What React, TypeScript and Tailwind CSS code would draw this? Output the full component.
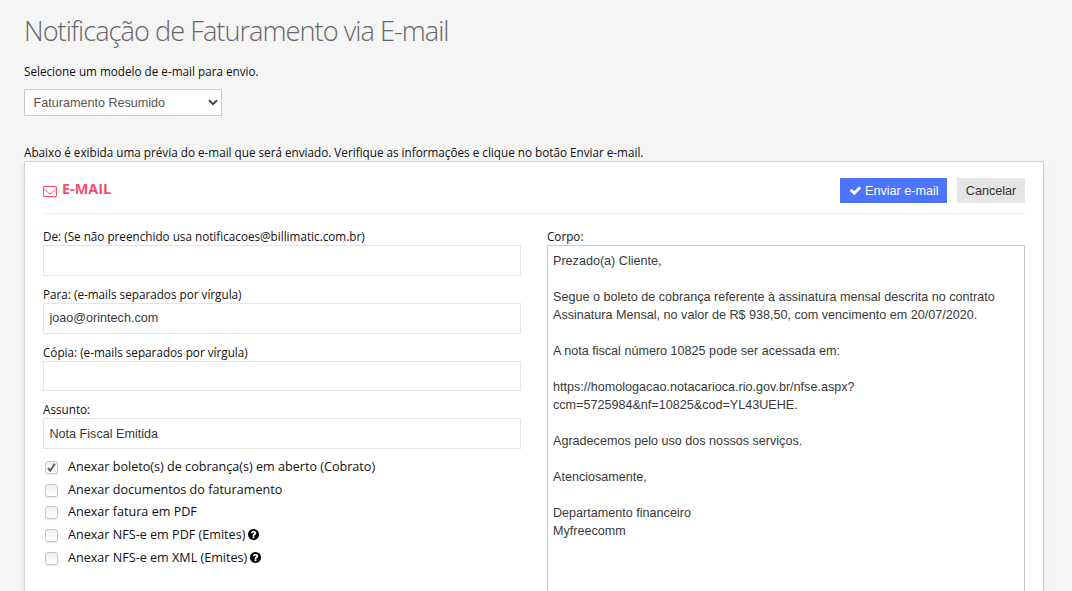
import React from "react";

const labelCls = "h-[18px] text-[11.71px] leading-[18px] whitespace-nowrap text-[#111]";
const inputCls =
  "block w-full border border-[#e5e5e5] bg-white px-[5.5px] font-['Liberation_Sans',sans-serif] text-[12.6px] text-[#393939] outline-none";

function Field({ label, value, gap, height }: { label: string; value: string; gap: string; height: string }) {
  return (
    <div className={gap}>
      <label className={`block ${labelCls}`}>{label}</label>
      <input type="text" className={`${inputCls} ${height}`} defaultValue={value} />
    </div>
  );
}

function Help() {
  return (
    <svg viewBox="128 128 1536 1536" className="mb-px ml-[3px] size-[11px] fill-black">
      <path d="M1024 1376v-192q0-14-9-23t-23-9h-192q-14 0-23 9t-9 23v192q0 14 9 23t23 9h192q14 0 23-9t9-23zm256-672q0-88-55.5-163t-138.5-116-170-41q-243 0-371 213-15 24 8 42l132 100q7 6 19 6 16 0 25-12 53-68 86-92 34-24 86-24 48 0 85.5 26t37.5 59q0 38-20 61t-68 45q-63 28-115.5 86.5t-52.5 125.5v36q0 14 9 23t23 9h192q14 0 23-9t9-23q0-19 21.5-49.5t54.5-49.5q32-18 49-28.5t46-35 44.5-48 28-60.5 12.5-81zm384 192q0 209-103 385.5t-279.5 279.5-385.5 103-385.5-103-279.5-279.5-103-385.5 103-385.5 279.5-279.5 385.5-103 385.5 103 279.5 279.5 103 385.5z" />
    </svg>
  );
}

function Option({ label, checked, help, row, pad = "pt-[1.5px]" }: { label: string; checked?: boolean; help?: boolean; row: string; pad?: string }) {
  return (
    <div className={`flex items-center text-[12.6px] whitespace-nowrap text-[#111] ${row}`}>
      <span className="mt-[1.5px] mr-[10px] ml-[2px] flex size-[13px] items-center justify-center rounded-[3px] border border-[#c6c6c6] bg-linear-to-b from-[#f0f0f0] to-white shadow-[0_1px_1px_rgba(0,0,0,0.1)]">
        {checked && (
          <svg viewBox="0 0 9 9" className="size-[9px]" fill="none" stroke="#606060" strokeWidth="2">
            <path d="M1 4.8 3.3 7.7 7.8.8" />
          </svg>
        )}
      </span>
      <span className={`leading-[18px] ${pad}`}>{label}</span>
      {help && <Help />}
    </div>
  );
}

const message = `Prezado(a) Cliente,

Segue o boleto de cobrança referente à assinatura mensal descrita no contrato
Assinatura Mensal, no valor de R$ 938,50, com vencimento em 20/07/2020.

A nota fiscal número 10825 pode ser acessada em:

https://homologacao.notacarioca.rio.gov.br/nfse.aspx?
ccm=5725984&nf=10825&cod=YL43UEHE.

Agradecemos pelo uso dos nossos serviços.

Atenciosamente,

Departamento financeiro
Myfreecomm`;

export default function App() {
  return (
    <div className="flex h-[591px] w-[1072px] flex-col overflow-hidden bg-[#f5f5f5] px-6 pt-[11px] font-['Open_Sans',sans-serif]">
      <h1 className="h-10 shrink-0 text-[27.2px] leading-[39px] font-light tracking-[-0.98px] whitespace-nowrap text-[#666]">
        Notificação de Faturamento via E-mail
      </h1>
      <p className="mt-3 h-[18px] shrink-0 text-[11.71px] leading-[16px] whitespace-nowrap text-[#111]">
        Selecione um modelo de e-mail para envio.
      </p>
      <button className="mt-2 flex h-[27px] w-[198px] shrink-0 items-center justify-between border border-[#ccc] bg-white pt-px pr-[3px] pl-[8.5px] font-['Liberation_Sans',sans-serif] text-[12.6px] text-[#555]">
        <span>Faturamento Resumido</span>
        <svg viewBox="0 0 10 7" className="mb-px h-[7px] w-[10px]" fill="none" stroke="#444" strokeWidth="2">
          <path d="M1 1.2 5 5.2 9 1.2" />
        </svg>
      </button>
      <p className="mt-[27px] h-[18px] shrink-0 text-[11.71px] leading-[18px] whitespace-nowrap text-[#111]">
        Abaixo é exibida uma prévia do e-mail que será enviado. Verifique as informações e clique no botão Enviar e-mail.
      </p>
      <main className="h-[460px] w-[1020px] shrink-0 border border-[#d0d0d0] bg-white px-[18px] pt-4 shadow-[0_4px_6px_rgba(0,0,0,0.08)]">
        <header className="flex h-9 items-start justify-between border-b border-[#eee]">
          <h2 className="flex items-center text-[14.4px] leading-[22px] font-bold text-[#f94c6c]">
            <svg viewBox="0 0 14 11" className="mt-[5px] mr-[5px] h-[11px] w-[14px]" fill="none" stroke="#f94c6c" strokeWidth="1">
              <rect x=".5" y=".5" width="13" height="10" rx=".5" />
              <path d="M.7 2.5C3 4.7 5.5 7.6 7 7.6S11 4.7 13.3 2.5" />
            </svg>
            E-MAIL
          </h2>
          <div className="flex gap-[10px] font-['Liberation_Sans',sans-serif] text-[12.6px]">
            <button className="flex h-[25px] w-[107px] items-center bg-[#4d74ff] pt-px pl-[10px] text-white">
              <svg viewBox="121 270 1550 1252" className="mr-1 mb-px h-[9px] w-[11px] fill-white">
                <path d="M1671 566q0 40-28 68l-724 724-136 136q-28 28-68 28t-68-28l-136-136-362-362q-28-28-28-68t28-68l136-136q28-28 68-28t68 28l294 295 656-657q28-28 68-28t68 28l136 136q28 28 28 68z" />
              </svg>
              Enviar e-mail
            </button>
            <button className="h-[25px] w-[68px] bg-[#e5e5e5] pt-px text-[#333]">Cancelar</button>
          </div>
        </header>
        <div className="mt-[13px] flex gap-[26px]">
          <section className="w-[478px]">
            <Field label="De: (Se não preenchido usa notificacoes@billimatic.com.br)" value="" gap="mb-[9px]" height="h-[31px]" />
            <Field label="Para: (e-mails separados por vírgula)" value="joao@orintech.com" gap="mb-[9px]" height="h-[31px] pb-[2px]" />
            <Field label="Cópia: (e-mails separados por vírgula)" value="" gap="mb-[9px]" height="h-[30px]" />
            <Field label="Assunto:" value="Nota Fiscal Emitida" gap="mb-[6px]" height="h-[31px]" />
            <Option label="Anexar boleto(s) de cobrança(s) em aberto (Cobrato)" checked row="h-[23px]" />
            <Option label="Anexar documentos do faturamento" row="h-[23px]" />
            <Option label="Anexar fatura em PDF" row="h-[22px]" pad="pb-px" />
            <Option label="Anexar NFS-e em PDF (Emites)" help row="h-[23px]" />
            <Option label="Anexar NFS-e em XML (Emites)" help row="h-[23px]" />
          </section>
          <section className="w-[478px]">
            <label className={`block ${labelCls}`}>Corpo:</label>
            <div className="h-[370px] border border-[#ccc] px-[5px] pt-[6px] font-['Liberation_Sans',sans-serif] text-[12.6px] leading-[18px] whitespace-pre text-[#393939]">
              {message}
            </div>
          </section>
        </div>
      </main>
    </div>
  );
}
